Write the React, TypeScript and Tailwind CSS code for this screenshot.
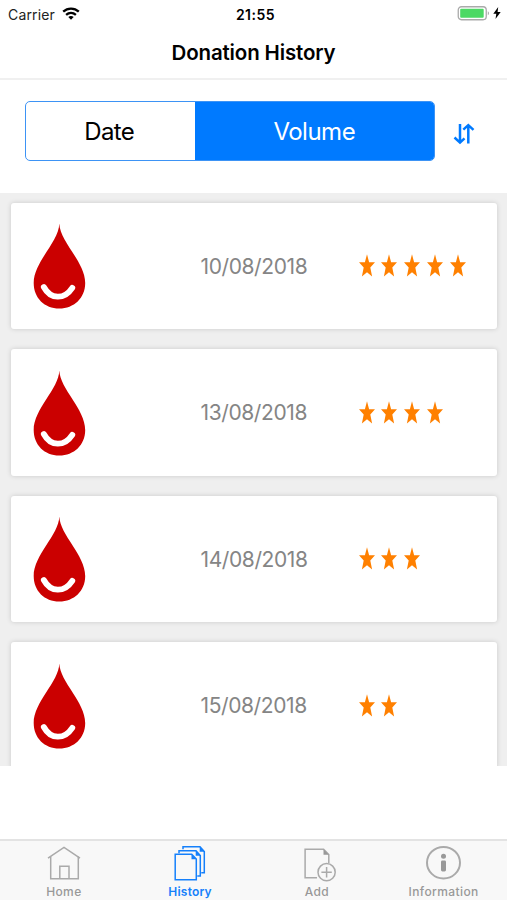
interface Donation {
  date: string
  stars: number
}

const donations: Donation[] = [
  { date: '10/08/2018', stars: 5 },
  { date: '13/08/2018', stars: 4 },
  { date: '14/08/2018', stars: 3 },
  { date: '15/08/2018', stars: 2 },
]

export default function App() {
  return (
    <div className="flex h-[900px] w-[507px] flex-col overflow-hidden bg-white font-['Inter',sans-serif] text-black">
      <StatusBar />

      <header className="flex h-[52px] items-center justify-center border-b-2 border-[#f0f0f0]">
        <h1 className="text-[20.5px] font-semibold tracking-[-0.15px]">Donation History</h1>
      </header>

      {/* ── Sort controls ── */}
      <div className="flex h-[113px] pt-[21px] pl-[25px]">
        <div className="flex h-[60px] w-[410px] overflow-hidden rounded-[5px] border border-[#3d93f5]">
          <button className="w-[168.5px] pt-[2px] pr-[2px] text-[24px] tracking-[-0.6px]">Date</button>
          <button className="flex-1 bg-[#007aff] pt-[2px] text-[24px] tracking-[-0.5px] text-white">Volume</button>
        </div>
        <button className="ml-[18px] flex h-[60px] items-center pt-[5px]" aria-label="Reverse order">
          <SortIcon />
        </button>
      </div>

      {/* ── History ── */}
      <main className="h-[573px] overflow-hidden bg-[#efefef] px-[10.5px] pt-[9.5px]">
        <ul className="flex flex-col gap-[20px]">
          {donations.map((donation) => (
            <DonationCard key={donation.date} donation={donation} />
          ))}
        </ul>
      </main>

      <TabBar />
    </div>
  )
}

// ── Sections ─────────────────────────────────────────────────────────────────

function StatusBar() {
  return (
    <div className="grid h-[28px] grid-cols-3 items-center pl-2 pr-[6px]">
      <div className="flex items-center gap-[7px]">
        <span className="text-[14px] tracking-[0.15px] text-[#222]">Carrier</span>
        <svg width="18" height="14" viewBox="0 0 18 14" fill="none" stroke="#000" strokeWidth="2.3">
          <path d="M1.2 4.7C5.7 0.5 12.3 0.5 16.8 4.7" />
          <path d="M4.1 7.8c2.9-2.5 6.9-2.5 9.8 0" />
          <path d="M9 12.8 6.3 10c1.6-1.3 3.8-1.3 5.4 0z" fill="#000" stroke="none" />
        </svg>
      </div>
      <span className="pl-[2px] text-center text-[14px] font-semibold tracking-[0.5px]">21:55</span>
      <div className="flex items-center justify-end gap-[3px] pb-[2px]">
        <svg width="33" height="15" viewBox="0 0 33 15">
          <rect x="1.25" y="0.75" width="28" height="13" rx="3.2" fill="#fff" stroke="#aaa" strokeWidth="1.3" />
          <rect x="3.2" y="2.7" width="23.5" height="9" rx="1" fill="#4cd964" />
          <path d="M30.8 5.2c1.6.7 1.6 3.4 0 4.1z" fill="#aaa" />
        </svg>
        <svg width="8" height="12" viewBox="0 0 8 12">
          <path d="M5.2 0 0.3 6.7h3L2.5 12l5.2-7.1H4.6z" fill="#000" />
        </svg>
      </div>
    </div>
  )
}

function DonationCard({ donation }: { donation: Donation }) {
  return (
    <li className="flex h-[126.5px] shrink-0 items-center rounded-[3px] bg-white pt-px pl-[22.5px] shadow-[0_0_5px_rgba(0,0,0,0.16)]">
      <DropIcon />
      <span className="ml-[114.5px] w-[158px] text-[21px] tracking-[-0.4px] text-[#858585]">
        {donation.date}
      </span>
      <div className="flex gap-[6.8px] pb-px">
        {Array.from({ length: donation.stars }, (_, i) => (
          <StarIcon key={i} />
        ))}
      </div>
    </li>
  )
}

function TabBar() {
  return (
    <nav className="mt-auto grid h-[61px] grid-cols-4 border-t-2 border-[#e3e3e3] bg-[#f8f8f8] text-[12px] font-medium tracking-[0.4px] text-[#999]">
      <div className="flex flex-col items-center pl-px">
        <HomeIcon />
        <span className="mt-px leading-[17px]">Home</span>
      </div>
      <div className="flex flex-col items-center text-[#1580fb]">
        <HistoryIcon />
        <span className="mt-px leading-[17px] font-semibold tracking-[0.2px]">History</span>
      </div>
      <div className="flex flex-col items-center">
        <AddIcon />
        <span className="mt-px leading-[17px]">Add</span>
      </div>
      <div className="flex flex-col items-center">
        <InfoIcon />
        <span className="mt-px leading-[17px]">Information</span>
      </div>
    </nav>
  )
}

// ── Icons ────────────────────────────────────────────────────────────────────

function SortIcon() {
  return (
    <svg width="22" height="22" viewBox="0 0 22 22" fill="none" stroke="#007aff" strokeWidth="2.5">
      <path d="M7 1v18.5M1.5 14.5 7 19.6l4.5-4.2" />
      <path d="M15.3 20.5V2.3M10.3 6.6l5-4.5 5.2 4.8" />
    </svg>
  )
}

function DropIcon() {
  return (
    <svg width="53" height="86" viewBox="0 0 53 86">
      <path
        d="M26.3 0.5C27 19 52.2 39 52.2 60C52.2 75 41 85.5 26.3 85.5S0.7 75 0.7 60C0.7 39 25.8 19 26.3 0.5Z"
        fill="#cb0000"
      />
      <path d="M10.8 64c7 12.8 20.5 12.8 28.5 0.8" fill="none" stroke="#fff" strokeWidth="5.8" strokeLinecap="round" />
    </svg>
  )
}

function StarIcon() {
  return (
    <svg width="16" height="23" viewBox="0 0 16 23">
      <path d="M8 0.3 10.1 8.3H16L11.3 13.5 13.1 22.5 8 18.2 2.9 22.5 4.7 13.5 0 8.3H5.9Z" fill="#ff8000" />
    </svg>
  )
}

function HomeIcon() {
  return (
    <svg width="34" height="41" viewBox="0 0 34 41" fill="none" stroke="#aaa" strokeWidth="1.5">
      <path d="M1 17.2 17 6.5l16 10.7" />
      <path d="M3.7 15.5v22.3h27.6V15.5" />
      <path d="M12.8 37.8V25.3h9.2v12.5" />
    </svg>
  )
}

function HistoryIcon() {
  return (
    <svg width="32" height="41" viewBox="0 0 32 41" fill="none" stroke="#1580fb" strokeWidth="1.5">
      <path d="M9 8.2V5.7h17l4.3 4.8v21.3h-3" />
      <path d="M5 12.2V9.8h17l4.3 4.8V35h-3" />
      <path d="M1.2 13.3h16.5l4.6 4.8v20.6H1.2z" />
      <path d="M17.5 13.3v5h5zM21.7 9.8v5h5zM25.7 5.7v5h5z" fill="#1580fb" stroke="none" />
    </svg>
  )
}

function AddIcon() {
  return (
    <svg className="ml-[6px]" width="32" height="41" viewBox="0 0 32 41" fill="none" stroke="#aaa" strokeWidth="1.5">
      <path d="M13 36.7H1.1V8.3h18.5l5.2 5.2V22" />
      <path d="M19.5 8.3v5.5h5.5z" fill="#999" stroke="none" />
      <circle cx="22.6" cy="31.2" r="8.6" />
      <path d="M22.6 26v10.4M17.4 31.2h10.4" />
    </svg>
  )
}

function InfoIcon() {
  return (
    <svg width="36" height="41" viewBox="0 0 36 41" fill="none">
      <ellipse cx="17.5" cy="21.7" rx="16.5" ry="15.8" stroke="#aaa" strokeWidth="2" />
      <circle cx="17.5" cy="15.2" r="2.5" fill="#999" />
      <rect x="15" y="19.4" width="5" height="11" rx="1.4" fill="#999" />
    </svg>
  )
}
